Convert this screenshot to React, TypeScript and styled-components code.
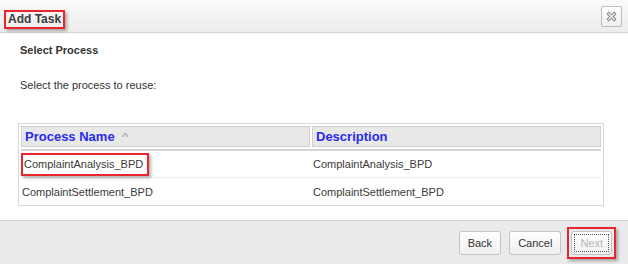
import React from 'react';
import styled, {createGlobalStyle} from 'styled-components';

const GlobalStyle = createGlobalStyle`
  html, body {
    margin: 0;
    padding: 0;
    background: #ffffff;
  }
  body {
    font-family: "Liberation Sans", Arial, sans-serif;
  }
`

const Dialog = styled.div`
  width: 628px;
  height: 264px;
  display: flex;
  flex-direction: column;
  background: #ffffff;
  overflow: hidden;
`

const TitleBar = styled.div`
  height: 33px;
  flex: none;
  display: flex;
  align-items: center;
  justify-content: space-between;
  padding: 0 6px 0 4px;
  background: linear-gradient(#fafafa, #ececec);
  border-bottom: 1px solid #d4d4d4;
  box-sizing: border-box;
`

const Highlight = styled.div<{ pad?: string }>`
  display: inline-flex;
  align-items: center;
  border: 2px solid #e8262b;
  padding: ${p => p.pad || '0 2px'};
  box-shadow: 2px 2px 3px rgba(0, 0, 0, 0.3);
  box-sizing: border-box;
`

const Title = styled.span`
  font-size: 12px;
  font-weight: bold;
  color: #3a3a3a;
  line-height: 14px;
`

const CloseButton = styled.div`
  width: 21px;
  height: 21px;
  border: 1px solid #bdbdbd;
  border-radius: 2px;
  background: linear-gradient(#ffffff, #eeeeee);
  display: flex;
  align-items: center;
  justify-content: center;
  box-sizing: border-box;
  margin-top: 1px;
`

const Body = styled.div`
  flex: 1;
  padding: 11px 24px 0 18px;
`

const Heading = styled.div`
  font-size: 11px;
  font-weight: bold;
  color: #333333;
  padding-left: 2px;
  height: 14px;
`

const Hint = styled.div`
  font-size: 11px;
  color: #333333;
  padding-left: 2px;
  margin-top: 21px;
`

const Table = styled.div`
  margin-top: 32px;
  width: 586px;
  border: 1px solid #d8d8d8;
  box-sizing: border-box;
  padding: 2px 2px 0 2px;
`

const HeaderRow = styled.div`
  display: grid;
  grid-template-columns: 289px 1fr;
  gap: 2px;
  padding-bottom: 2px;
  border-bottom: 2px solid #d6d6d6;
`

const HeaderCell = styled.div`
  height: 21px;
  background: #e8e8e8;
  border: 1px solid #d0d0d0;
  box-sizing: border-box;
  display: flex;
  align-items: center;
  padding-left: 3px;
  font-size: 13px;
  font-weight: bold;
  color: #2a2af0;
`

const Caret = styled.span`
  margin-left: 8px;
  font-size: 10px;
  color: #999999;
  font-weight: normal;
  transform: scaleX(1.4);
  margin-top: 2px;
`

const Row = styled.div<{ last?: boolean }>`
  display: grid;
  grid-template-columns: 291px 1fr;
  height: 27px;
  align-items: center;
  border-bottom: ${p => (p.last ? 'none' : '1px solid #ececec')};
  box-sizing: border-box;
`

const Cell = styled.div`
  font-size: 11px;
  color: #3a3a3a;
  padding-left: 1px;
`

const Footer = styled.div`
  height: 43px;
  flex: none;
  background: #eaeaec;
  border-top: 1px solid #d0d0d2;
  display: flex;
  justify-content: flex-end;
  align-items: center;
  gap: 8px;
  padding-right: 14px;
`

const Button = styled.div<{ disabled?: boolean }>`
  height: 24px;
  padding: 0 8px;
  display: flex;
  align-items: center;
  font-size: 11px;
  color: ${p => (p.disabled ? '#b8b8b8' : '#333333')};
  background: linear-gradient(#ffffff, #f0f0f0);
  border: 1px solid #c4c4c4;
  border-radius: 3px;
  box-sizing: border-box;
  outline: ${p => (p.disabled ? '1px dotted #555' : 'none')};
  outline-offset: -4px;
`

const rows = [
  {name: 'ComplaintAnalysis_BPD', desc: 'ComplaintAnalysis_BPD'},
  {name: 'ComplaintSettlement_BPD', desc: 'ComplaintSettlement_BPD'},
];

export default function App() {
  return (
    <>
      <GlobalStyle/>
      <Dialog>
        <TitleBar>
          <Highlight pad="1px 2px 1px 2px" style={{height: 19, marginTop: 6}}>
            <Title>Add Task</Title>
          </Highlight>
          <CloseButton>
            <svg width="13" height="13" viewBox="0 0 12 12" fill="none">
              <path d="M2 3.5 L3.5 2 L6 4.5 L8.5 2 L10 3.5 L7.5 6 L10 8.5 L8.5 10 L6 7.5 L3.5 10 L2 8.5 L4.5 6 Z"
                    stroke="#8c8c8c" strokeWidth="1" strokeLinejoin="round" fill="#ffffff"/>
            </svg>
          </CloseButton>
        </TitleBar>
        <Body>
          <Heading>Select Process</Heading>
          <Hint>Select the process to reuse:</Hint>
          <Table>
            <HeaderRow>
              <HeaderCell>Process Name<Caret>^</Caret></HeaderCell>
              <HeaderCell>Description</HeaderCell>
            </HeaderRow>
            {rows.map((r, i) => (
              <Row key={r.name} last={i === rows.length - 1}>
                <Cell>
                  {i === 0
                    ? <Highlight pad="0 4px 0 1px" style={{height: 23, marginLeft: -1}}>{r.name}</Highlight>
                    : r.name}
                </Cell>
                <Cell>{r.desc}</Cell>
              </Row>
            ))}
          </Table>
        </Body>
        <Footer>
          <Button>Back</Button>
          <Button>Cancel</Button>
          <Highlight pad="2px" style={{marginLeft: -2, marginRight: -2}}>
            <Button disabled>Next</Button>
          </Highlight>
        </Footer>
      </Dialog>
    </>
  );
}
